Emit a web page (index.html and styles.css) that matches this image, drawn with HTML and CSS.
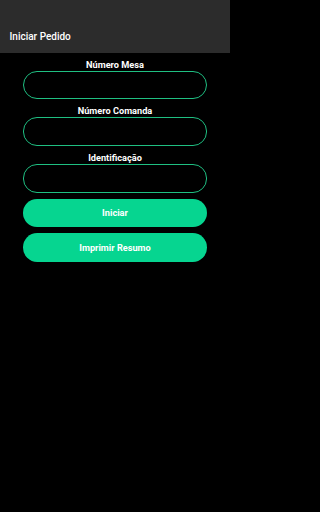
FILE: index.html
```html
<!DOCTYPE html>
<html lang="pt">
<head>
<meta charset="utf-8">
<meta name="viewport" content="width=230">
<title>Iniciar Pedido</title>
<link rel="stylesheet" href="styles.css">
</head>
<body>
<div class="page">
  <header class="appbar">
    <h1 class="title">Iniciar Pedido</h1>
  </header>
  <main class="form">
    <label class="field">
      <span class="label">Número Mesa</span>
      <input class="input" type="text">
    </label>
    <label class="field">
      <span class="label">Número Comanda</span>
      <input class="input" type="text">
    </label>
    <label class="field">
      <span class="label">Identificação</span>
      <input class="input" type="text">
    </label>
    <div class="actions">
      <button class="btn" type="button">Iniciar</button>
      <button class="btn" type="button">Imprimir Resumo</button>
    </div>
  </main>
</div>
</body>
</html>
```
FILE: styles.css
```css
html, body {
  margin: 0;
  padding: 0;
  background: #000;
  height: 100%;
}
body {
  font-family: Roboto, "Liberation Sans", sans-serif;
  color: #fff;
}
.page {
  width: 230px;
  min-height: 512px;
  background: #000;
}
.appbar {
  height: 53px;
  background: #2c2c2c;
  display: flex;
  align-items: flex-end;
  box-sizing: border-box;
  padding: 0 0 9.5px 9.5px;
}
.title {
  margin: 0;
  font-size: 10px;
  font-weight: 500;
  line-height: 14px;
  color: #fff;
}
.form {
  display: flex;
  flex-direction: column;
  padding: 5.5px 23px 0;
  gap: 6px;
}
.field {
  display: flex;
  flex-direction: column;
  align-items: stretch;
}
.label {
  text-align: center;
  font-size: 9.2px;
  font-weight: 700;
  line-height: 12.2px;
  color: #fff;
}
.input {
  box-sizing: border-box;
  height: 28.5px;
  width: 100%;
  margin: 0;
  background: transparent;
  border: 1px solid #1fbf82;
  border-radius: 14px;
  outline: none;
  color: #fff;
  padding: 0 12px;
  font-family: inherit;
}
.actions {
  display: flex;
  flex-direction: column;
  gap: 6px;
}
.btn {
  height: 28.5px;
  border: none;
  border-radius: 14.25px;
  background: #06d590;
  color: #fff;
  font-family: inherit;
  font-size: 9.2px;
  font-weight: 700;
  padding: 0;
}
```
